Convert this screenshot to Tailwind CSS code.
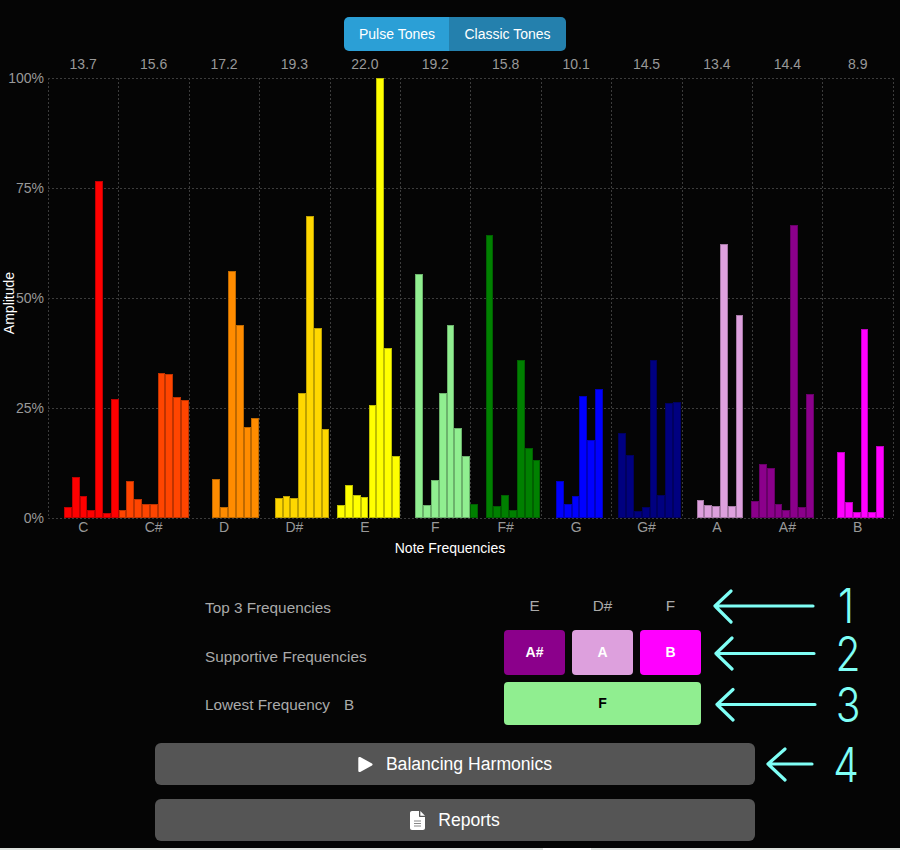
<!DOCTYPE html>
<html lang="en">
<head>
  <meta charset="UTF-8">
  <title>Note Frequencies</title>
  <script src="https://cdn.jsdelivr.net/npm/@tailwindcss/browser@4"></script>
</head>
<body class="bg-[#050505] font-['Liberation_Sans',Arial,sans-serif] w-[900px] h-[850px] overflow-hidden relative">

  <!-- Tone switch -->
  <div class="flex justify-center pt-[17px] pl-[10px]">
    <div class="flex h-[34px] w-[222px] rounded-[5px] overflow-hidden text-[14px] text-white">
      <div class="w-[105px] pl-[1px] bg-[#2b9fd6] flex items-center justify-center">Pulse Tones</div>
      <div class="flex-1 bg-[#2480ad] flex items-center justify-center">Classic Tones</div>
    </div>
  </div>

  <!-- Values above chart -->
  <div class="grid grid-cols-12 ml-[48px] w-[845px] h-[18px] mt-[4px] mb-[5px] text-[14px] leading-[18px] text-[#999] text-center">
    <span>13.7</span><span>15.6</span><span>17.2</span><span>19.3</span><span>22.0</span><span>19.2</span>
    <span>15.8</span><span>10.1</span><span>14.5</span><span>13.4</span><span>14.4</span><span>8.9</span>
  </div>

  <!-- Chart -->
  <div class="flex relative">
    <div class="w-[44px] h-[440px] flex flex-col justify-between items-end text-[14px] text-[#999]">
      <div class="h-0 flex items-center">100%</div>
      <div class="h-0 flex items-center">75%</div>
      <div class="h-0 flex items-center">50%</div>
      <div class="h-0 flex items-center">25%</div>
      <div class="h-0 flex items-center">0%</div>
    </div>
    <div class="absolute left-[9px] top-[225px] -translate-x-1/2 -translate-y-1/2 -rotate-90 text-[14px] text-white whitespace-nowrap">Amplitude</div>
    <div id="plot" class="relative ml-[4px] w-[845px] h-[440px]">
      <svg id="grid" class="absolute left-0 top-0 overflow-visible" width="845" height="440"></svg>
    </div>
  </div>

  <div class="grid grid-cols-12 ml-[48px] w-[845px] h-[18px] text-[14px] leading-[18px] text-[#999] text-center">
    <span>C</span><span>C#</span><span>D</span><span>D#</span><span>E</span><span>F</span>
    <span>F#</span><span>G</span><span>G#</span><span>A</span><span>A#</span><span>B</span>
  </div>
  <div class="h-[24px] flex items-center justify-center text-[14px] text-white">Note Frequencies</div>

  <!-- Frequency rows -->
  <div class="ml-[205px] w-[496px] mt-[24px] text-[15.300px] text-[#aaa]">
    <div class="flex items-center h-[46px]">
      <div class="w-[299px] pt-[2px]">Top 3 Frequencies</div>
      <div class="grid grid-cols-3 gap-[7px] w-[197px] text-center -mt-[2px]">
        <span>E</span><span>D#</span><span>F</span>
      </div>
    </div>
    <div class="flex items-center h-[45px]">
      <div class="w-[299px] pt-[10px]">Supportive Frequencies</div>
      <div class="grid grid-cols-3 gap-[7px] w-[197px] h-[45px] text-[14px] font-bold text-white">
        <div class="bg-[#8b008b] rounded-[4px] flex items-center justify-center">A#</div>
        <div class="bg-[#dda0dd] rounded-[4px] flex items-center justify-center">A</div>
        <div class="bg-[#ff00ff] rounded-[4px] flex items-center justify-center">B</div>
      </div>
    </div>
    <div class="flex items-center h-[43px] mt-[7px]">
      <div class="w-[299px] pt-[4px]">Lowest Frequency<span class="ml-[14px]">B</span></div>
      <div class="w-[197px] h-[43px] bg-[#90ee90] rounded-[4px] flex items-center justify-center text-[14px] font-bold text-black">F</div>
    </div>
  </div>

  <!-- Actions -->
  <div class="ml-[155px] w-[600px] text-[17.600px] text-white">
    <button class="w-full h-[42px] mt-[18px] bg-[#555] rounded-[6px] flex items-center justify-center gap-[13px]">
      <svg width="15" height="17" viewBox="0 0 15 17"><path d="M.3 2.200v12.600c0 1 1 1.600 1.900 1.100l11.800-6.300c.8-.5.8-1.700 0-2.200L2.200 1.100C1.300.6.3 1.200.3 2.200z" fill="#fff"/></svg>
      <span>Balancing Harmonics</span>
    </button>
    <button class="w-full h-[42px] mt-[14px] bg-[#555] rounded-[6px] flex items-center justify-center gap-[13px]">
      <svg width="15" height="19" viewBox="0 0 15 19"><path d="M2 0h7v5c0 .6.4 1 1 1h5v11c0 1.100-.9 2-2 2H2c-1.100 0-2-.9-2-2V2C0 .9.900 0 2 0z" fill="#fff"/><path d="M10.300 0 15 4.700H10.300z" fill="#fff"/><path d="M4 10h7M4 12.500h7M4 15h7" stroke="#888" stroke-width="1.200"/></svg>
      <span>Reports</span>
    </button>
  </div>

  <!-- Bottom edge of the window -->
  <div class="mt-[7px] h-[2px] bg-[#dfe3e0] relative">
    <div class="absolute left-[543px] w-[48px] h-[2px] bg-white"></div>
  </div>

  <!-- Annotations -->
  <svg class="absolute left-0 top-0 pointer-events-none" width="900" height="850" fill="none" stroke="#7ffff6" stroke-width="3.200" stroke-linecap="round" stroke-linejoin="round">
    <path d="M813 606H715M731 591L715 606L731 622"/>
    <path d="M814 653.500H716M732 638L716 653.500L732 669"/>
    <path d="M815 704.500H717M733 689.500L717 704.500L733 720"/>
    <path d="M812 764H768M785 749L768 764L785 780"/>
  </svg>
  <div class="absolute left-[846px] top-[606px] h-0 flex items-center -translate-x-1/2 scale-x-[.85] leading-[38px] font-['Inter',sans-serif] font-light text-[48px] text-[#7ffff6]">1</div>
  <div class="absolute left-[848px] top-[654px] h-0 flex items-center -translate-x-1/2 scale-x-[.85] leading-[38px] font-['Inter',sans-serif] font-light text-[48px] text-[#7ffff6]">2</div>
  <div class="absolute left-[848px] top-[705px] h-0 flex items-center -translate-x-1/2 scale-x-[.85] leading-[38px] font-['Inter',sans-serif] font-light text-[48px] text-[#7ffff6]">3</div>
  <div class="absolute left-[846px] top-[765px] h-0 flex items-center -translate-x-1/2 scale-x-[.85] leading-[38px] font-['Inter',sans-serif] font-light text-[48px] text-[#7ffff6]">4</div>

  <script>
    // grid lines
    var grid = document.getElementById('grid');
    var lines = '';
    for (var i = 0; i <= 4; i++) {
      var y = i * 110 + 0.5;
      lines += '<line x1="0" x2="845" y1="' + y + '" y2="' + y + '" stroke="#3c3c3c" stroke-dasharray="2 2"/>';
    }
    for (var j = 0; j <= 12; j++) {
      var x = Math.round(j * 70.4) + 0.5;
      lines += '<line x1="' + x + '" x2="' + x + '" y1="0" y2="440" stroke="#3c3c3c" stroke-dasharray="2 2"/>';
    }
    grid.innerHTML = lines;

    // bars: [first slot, colour, heights in px]
    var groups = [
      [2, '#ff0000', [11, 41, 22, 8, 337, 5, 119]],
      [9, '#ff4500', [8, 37, 19, 14, 14, 145, 144, 121, 118]],
      [21, '#ff8c00', [39, 11, 247, 193, 91, 100]],
      [29, '#ffd700', [20, 22, 20, 125, 302, 190, 89]],
      [37, '#ffff00', [13, 33, 23, 21, 113, 440, 170, 62]],
      [47, '#90ee90', [244, 13, 38, 125, 193, 90, 62]],
      [54, '#008000', [14]],
      [56, '#008000', [283, 12, 23, 8, 158, 70, 58]],
      [65, '#0000ff', [37, 14, 22, 122, 78, 129]],
      [73, '#000080', [85, 63, 7, 11, 158, 23, 115, 116]],
      [83, '#dda0dd', [18, 13, 12, 274, 12, 203]],
      [90, '#8b008b', [17, 54, 50, 14, 8, 293, 11, 124]],
      [101, '#ff00ff', [66, 16, 6, 189, 6, 72]]
    ];
    var plot = document.getElementById('plot');
    groups.forEach(function (g) {
      g[2].forEach(function (h, n) {
        var bar = document.createElement('div');
        bar.className = 'absolute bottom-0 border border-black/25';
        bar.style.left = ((g[0] + n) * 7.81 + 0.3) + 'px';
        bar.style.width = '7.810px';
        bar.style.height = h + 'px';
        bar.style.background = g[1];
        plot.appendChild(bar);
      });
    });
  </script>
</body>
</html>
